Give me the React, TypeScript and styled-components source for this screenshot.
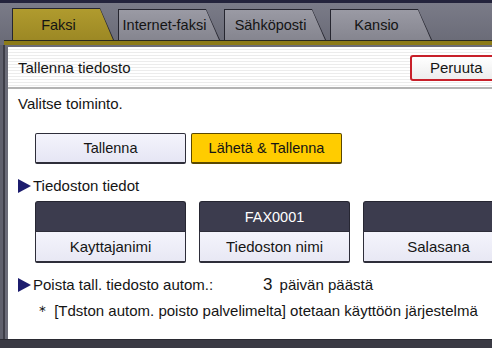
import * as React from 'react';
import styled, { createGlobalStyle, css } from 'styled-components';

const GlobalStyle = createGlobalStyle`
  html, body {
    margin: 0;
    padding: 0;
    background: #6b6c78;
  }
  body {
    font-family: "Liberation Sans", Arial, sans-serif;
    color: #151515;
  }
`;

const Screen = styled.div`
  width: 492px;
  height: 348px;
  overflow: hidden;
  display: flex;
  flex-direction: column;
  background: #6b6c78;
`;

const TopStrip = styled.div`
  height: 3px;
  background: #23233c;
  flex-shrink: 0;
`;

const TabBar = styled.div`
  height: 37px;
  display: flex;
  align-items: flex-end;
  gap: 4px;
  padding-left: 12px;
  background: linear-gradient(#7a7b88, #6b6c78);
  flex-shrink: 0;
`;

const TabOutline = styled.div<{ active?: boolean }>`
  width: 102px;
  height: 31px;
  background: #262630;
  clip-path: polygon(0 0, 88px 0, 102px 100%, 0 100%);
  padding: 1px 0 0 1px;
  box-sizing: border-box;
  ${({ active }) => active && css`
    height: 32px;
  `}
`;

const TabFace = styled.div<{ active?: boolean }>`
  height: 100%;
  width: 100%;
  clip-path: polygon(0 0, 87px 0, 100px 100%, 0 100%);
  background: ${({ active }) => (active ? 'linear-gradient(#b09b2e, #9c8824)' : 'linear-gradient(#9a9aa4, #85858f)')};
  display: flex;
  align-items: center;
  justify-content: center;
  padding-right: 10px;
  box-sizing: border-box;
  font-size: 14.5px;
  color: #141414;
`;

const GoldLine = styled.div`
  height: 4px;
  margin-left: 4px;
  background: #8c7b18;
  border-top: 1px solid #2a2a20;
  flex-shrink: 0;
`;

const Middle = styled.div`
  flex: 1;
  display: flex;
  min-height: 0;
`;

const LeftRail = styled.div`
  width: 8px;
  flex-shrink: 0;
  background: linear-gradient(90deg, #5f606c 0 3px, #3e3e48 3px 5px, #6b6c78 5px);
`;

const Panel = styled.div`
  flex: 1;
  margin-top: 2px;
  background: #ffffff;
  display: flex;
  flex-direction: column;
  min-width: 0;
  overflow: hidden;
`;

const TitleRow = styled.div`
  height: 40px;
  display: flex;
  align-items: center;
  justify-content: space-between;
  padding-left: 10px;
  background: repeating-linear-gradient(#ffffff 0 2px, #ececec 2px 3px);
  border-bottom: 2px solid #b4b4b4;
  flex-shrink: 0;
`;

const Title = styled.span`
  font-size: 15px;
`;

const CancelButton = styled.div`
  width: 92px;
  height: 26px;
  margin-right: -10px;
  margin-top: 1px;
  border: 2px solid #c8202a;
  border-radius: 3px;
  background: linear-gradient(#ffffff, #ededed);
  display: flex;
  align-items: center;
  justify-content: flex-start;
  padding-left: 18px;
  box-sizing: border-box;
  font-size: 15px;
`;

const Content = styled.div`
  padding: 5px 0 0 10px;
  display: flex;
  flex-direction: column;
`;

const Prompt = styled.div`
  font-size: 15px;
  line-height: 20px;
`;

const ButtonRow = styled.div`
  display: flex;
  gap: 5px;
  margin: 19px 0 0 17px;
`;

const ActionButton = styled.div<{ selected?: boolean }>`
  width: 151px;
  height: 31px;
  box-sizing: border-box;
  display: flex;
  align-items: center;
  justify-content: center;
  font-size: 14.5px;
  border: 1px solid ${({ selected }) => (selected ? '#5a4800' : '#2e2e3a')};
  border-bottom-width: 2px;
  border-radius: 2px;
  background: ${({ selected }) => (selected ? '#ffcc00' : 'linear-gradient(#f4f4fc, #e6e6f4)')};
`;

const SectionLabel = styled.div<{ gap: number }>`
  display: flex;
  align-items: center;
  font-size: 15px;
  line-height: 20px;
  margin-top: ${({ gap }) => gap}px;
  white-space: nowrap;
`;

const Arrow = styled.span`
  width: 0;
  height: 0;
  border-top: 7px solid transparent;
  border-bottom: 7px solid transparent;
  border-left: 13px solid #1c1c6e;
  margin-right: 2px;
`;

const FieldRow = styled.div`
  display: flex;
  gap: 13px;
  margin: 5px 0 0 17px;
`;

const Field = styled.div`
  width: 151px;
  flex-shrink: 0;
  display: flex;
  flex-direction: column;
`;

const FieldValue = styled.div`
  height: 30px;
  background: #3c3c4e;
  border: 1px solid #262632;
  border-bottom: none;
  border-radius: 3px 3px 0 0;
  box-sizing: border-box;
  color: #ffffff;
  font-size: 14.5px;
  display: flex;
  align-items: center;
  justify-content: center;
`;

const FieldLabel = styled.div`
  height: 32px;
  background: linear-gradient(#f4f4fc, #e8e8f4);
  border: 1px solid #2e2e3a;
  border-bottom-width: 2px;
  border-radius: 0 0 2px 2px;
  box-sizing: border-box;
  font-size: 15px;
  display: flex;
  align-items: center;
  justify-content: center;
`;

const Days = styled.span`
  margin-left: 50px;
  font-size: 15px;
`;

const DayNumber = styled.span`
  font-size: 17px;
  margin-right: 7px;
`;

const Note = styled.div`
  font-size: 15px;
  line-height: 20px;
  margin: 6px 0 0 17px;
  white-space: nowrap;
`;

const BottomBar = styled.div`
  height: 8px;
  background: #3a3a44;
  border-top: 1px solid #2a2a32;
  flex-shrink: 0;
`;

const tabs = ['Faksi', 'Internet-faksi', 'Sähköposti', 'Kansio'];

const fields = [
  { value: '', label: 'Kayttajanimi' },
  { value: 'FAX0001', label: 'Tiedoston nimi' },
  { value: '', label: 'Salasana' },
];

export default function App() {
  return (
    <>
      <GlobalStyle />
      <Screen>
        <TopStrip />
        <TabBar>
          {tabs.map((t, i) => (
            <TabOutline key={t} active={i === 0}>
              <TabFace active={i === 0}>{t}</TabFace>
            </TabOutline>
          ))}
        </TabBar>
        <GoldLine />
        <Middle>
          <LeftRail />
          <Panel>
            <TitleRow>
              <Title>Tallenna tiedosto</Title>
              <CancelButton>Peruuta</CancelButton>
            </TitleRow>
            <Content>
              <Prompt>Valitse toiminto.</Prompt>
              <ButtonRow>
                <ActionButton>Tallenna</ActionButton>
                <ActionButton selected>Lähetä &amp; Tallenna</ActionButton>
              </ButtonRow>
              <SectionLabel gap={12}>
                <Arrow />
                Tiedoston tiedot
              </SectionLabel>
              <FieldRow>
                {fields.map((f) => (
                  <Field key={f.label}>
                    <FieldValue>{f.value}</FieldValue>
                    <FieldLabel>{f.label}</FieldLabel>
                  </Field>
                ))}
              </FieldRow>
              <SectionLabel gap={12}>
                <Arrow />
                Poista tall. tiedosto autom.:
                <Days>
                  <DayNumber>3</DayNumber>
                  päivän päästä
                </Days>
              </SectionLabel>
              <Note>＊ [Tdston autom. poisto palvelimelta] otetaan käyttöön järjestelmä</Note>
            </Content>
          </Panel>
        </Middle>
        <BottomBar />
      </Screen>
    </>
  );
}
